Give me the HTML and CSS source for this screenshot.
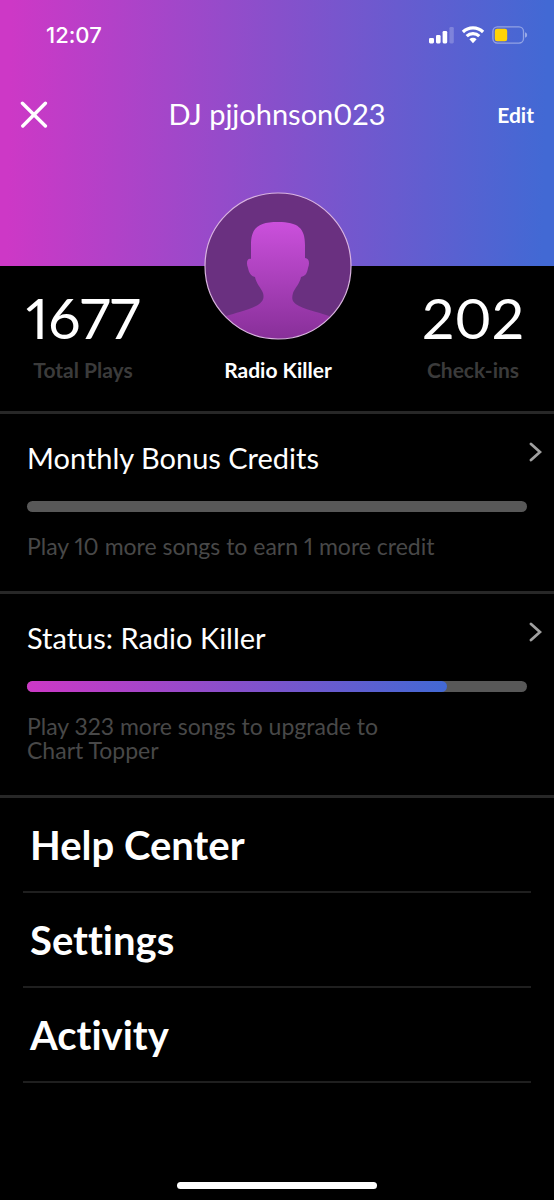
FILE: index.html
```html
<!DOCTYPE html>
<html lang="en">
<head>
<meta charset="utf-8">
<meta name="viewport" content="width=device-width, initial-scale=1">
<title>Profile</title>
<link rel="stylesheet" href="styles.css">
</head>
<body>
<div class="screen">
  <header class="hero">
    <div class="status-bar">
      <time class="clock">12:07</time>
      <div class="indicators">
        <svg class="signal" viewBox="0 0 25 18" width="25" height="18" fill="#fff" aria-hidden="true">
          <rect x="0" y="12" width="5" height="5.4" rx="1.3"/>
          <rect x="7" y="9" width="4.6" height="8.4" rx="1.3"/>
          <rect x="13.6" y="5" width="4.6" height="12.4" rx="1.3"/>
          <rect x="20.4" y="1" width="4.4" height="16.4" rx="1.3" opacity=".22"/>
        </svg>
        <svg class="wifi" viewBox="0 0 24 18" width="24" height="18" aria-hidden="true">
          <path d="M1.9 6A14.6 14.6 0 0 1 22.1 6M5.7 10.1A9 9 0 0 1 18.3 10.1" fill="none" stroke="#fff" stroke-width="3.2"/>
          <path d="M8.4 13.2A5.3 5.3 0 0 1 15.6 13.2L12 17.2Z" fill="#fff"/>
        </svg>
        <svg class="battery" viewBox="0 0 36 18" width="36" height="18" aria-hidden="true">
          <rect x=".9" y=".9" width="30.6" height="16.2" rx="4.5" fill="none" stroke="#fff" stroke-opacity=".4" stroke-width="1.3"/>
          <rect x="2.8" y="2.8" width="12.4" height="12.4" rx="2.3" fill="#ffd305"/>
          <path d="M33 6.2Q35.2 7 35.2 9T33 11.8Z" fill="#fff" opacity=".45"/>
        </svg>
      </div>
    </div>
    <nav class="nav">
      <button class="close" type="button" aria-label="Close">
        <svg viewBox="0 0 28 28" width="28" height="28" aria-hidden="true"><path d="M2.4 3.2 25.4 26M25.4 3.2 2.8 26" stroke="#fff" stroke-width="3.4" stroke-linecap="round"/></svg>
      </button>
      <h1 class="username">DJ pjjohnson023</h1>
      <button class="edit" type="button">Edit</button>
    </nav>
  </header>

  <main>
    <section class="stats">
      <div class="stat">
        <span class="number">1677</span>
        <span class="label">Total Plays</span>
      </div>
      <div class="profile">
        <svg class="avatar" viewBox="0 0 148 148" width="148" height="148" role="img" aria-label="Profile picture">
          <defs>
            <linearGradient id="person" x1="0" y1="0" x2="0" y2="1">
              <stop offset="0" stop-color="#cb50dc"/>
              <stop offset="1" stop-color="#872f98"/>
            </linearGradient>
            <clipPath id="disc"><circle cx="74" cy="74" r="73"/></clipPath>
          </defs>
          <circle cx="74" cy="74" r="73" fill="#6a3080"/>
          <path clip-path="url(#disc)" fill="url(#person)" d="M47 67V53C47 36 54 30 74 30S101 36 101 53V66C105 66 106 71 104 76C103 82 101 84 97 85C96 91 91 96 89 101C87 108 89 111 95 114C105 119 118 121 125 124L148 148H0L22 124C31 121 42 119 52 114C57 111 61 108 59 101C57 96 52 91 51 85C47 84 45 81 44 76C42 71 43 66 47 67Z"/>
          <circle cx="74" cy="74" r="73" fill="none" stroke="#d9b3df" stroke-width="1.2"/>
        </svg>
        <span class="rank">Radio Killer</span>
      </div>
      <div class="stat">
        <span class="number">202</span>
        <span class="label">Check-ins</span>
      </div>
    </section>

    <section class="progress">
      <div class="heading">
        <h2 class="title" id="bonus">Monthly Bonus Credits</h2>
        <button class="more" type="button" aria-label="Monthly bonus details">
          <svg viewBox="0 0 14 20" width="14" height="20" aria-hidden="true"><path d="M3 2 12 10 3 18" fill="none" stroke="#a0a0a0" stroke-width="2.8" stroke-linecap="round"/></svg>
        </button>
      </div>
      <div class="track" role="progressbar" aria-labelledby="bonus" aria-valuenow="0"></div>
      <p class="hint">Play 10 more songs to earn 1 more credit</p>
    </section>

    <section class="progress">
      <div class="heading">
        <h2 class="title" id="status">Status: Radio Killer</h2>
        <button class="more" type="button" aria-label="Status details">
          <svg viewBox="0 0 14 20" width="14" height="20" aria-hidden="true"><path d="M3 2 12 10 3 18" fill="none" stroke="#a0a0a0" stroke-width="2.8" stroke-linecap="round"/></svg>
        </button>
      </div>
      <div class="track" role="progressbar" aria-labelledby="status" aria-valuenow="84"><div class="fill" style="width:84%"></div></div>
      <p class="hint">Play 323 more songs to upgrade to<br>Chart Topper</p>
    </section>

    <ul class="menu">
      <li><a class="item" href="#help">Help Center</a></li>
      <li><a class="item" href="#settings">Settings</a></li>
      <li><a class="item" href="#activity">Activity</a></li>
    </ul>
  </main>
  <div class="home-indicator"></div>
</div>
</body>
</html>
```
FILE: styles.css
```css
* { box-sizing: border-box; }

body {
  margin: 0;
  background: #000;
  color: #fff;
  font-family: Lato, "Open Sans", sans-serif;
  font-variant-ligatures: none;
  font-variant-numeric: proportional-nums;
}

h1, h2, p, ul { margin: 0; padding: 0; font-weight: 400; }

button {
  border: 0;
  padding: 0;
  background: none;
  color: inherit;
  font: inherit;
  cursor: pointer;
}

svg { display: block; }

.screen {
  display: flex;
  flex-direction: column;
  min-height: 100vh;
}

.hero {
  padding-bottom: 108px;
  background: linear-gradient(91deg, #cd38c6 2%, #8750cb 50%, #4269d4 98%);
}

.status-bar {
  display: flex;
  align-items: center;
  justify-content: space-between;
  height: 70px;
  padding: 0 26px 0 46px;
}

.clock {
  font-family: Inter, sans-serif;
  font-size: 22px;
  font-weight: 500;
}

.indicators { display: flex; gap: 7px; }

.nav {
  display: grid;
  grid-template-columns: 1fr auto 1fr;
  align-items: center;
  height: 88px;
  padding: 0 20px;
}

.close { justify-self: start; }
.username { font-size: 29px; line-height: 36px; }
.edit { justify-self: end; font-size: 21px; font-weight: 700; }

.stats {
  display: grid;
  grid-template-columns: 116px 1fr 116px;
  height: 148px;
  padding: 0 23px 0 25px;
  border-bottom: 3px solid #272727;
}

.stat, .profile {
  display: flex;
  flex-direction: column;
  align-items: center;
}

.stat { padding-top: 18px; }
.number { font-size: 57px; line-height: 66px; }

.label, .rank {
  font-size: 21px;
  font-weight: 700;
  line-height: 28px;
}

.label { padding-top: 6px; color: #3b3b3b; }
.profile { margin-top: -74px; gap: 16px; }

.progress {
  padding: 24px 12px 30px 27px;
  border-bottom: 3px solid #272727;
}

.heading {
  display: flex;
  align-items: flex-start;
  justify-content: space-between;
}

.title { font-size: 29px; line-height: 40px; }
.more { padding-top: 4px; }

.track {
  height: 11px;
  margin: 23px 15px 22px 0;
  border-radius: 6px;
  background: #585858;
}

.fill {
  height: 100%;
  border-radius: 6px;
  background: linear-gradient(90deg, #cd38c6, #8750cb 50%, #4269d4);
}

.hint { color: #484848; font-size: 23px; line-height: 24px; padding-bottom: 3px; }

.menu { padding: 0 23px; list-style: none; }

.item {
  display: flex;
  align-items: center;
  height: 95px;
  padding-left: 7px;
  border-bottom: 2px solid #1f1f1f;
  color: inherit;
  font-size: 40px;
  font-weight: 700;
  text-decoration: none;
}

.home-indicator {
  width: 36%;
  height: 7px;
  margin: auto auto 11px;
  border-radius: 4px;
  background: #fff;
}
```
